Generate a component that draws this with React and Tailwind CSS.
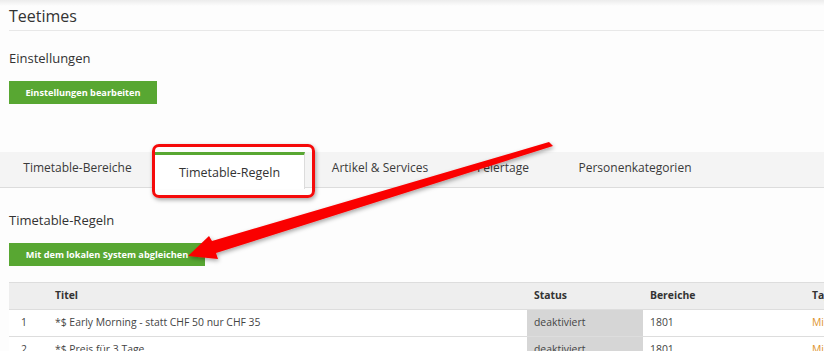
import React from "react";

const tabs = [
  { label: "Timetable-Bereiche", w: "w-[155px]" },
  { label: "Timetable-Regeln", w: "w-[150px]", active: true },
  { label: "Artikel & Services", w: "w-[150px]" },
  { label: "Feiertage", w: "w-[96px]" },
  { label: "Personenkategorien", w: "w-[168px]" },
];

const rows = [
  { nr: 1, title: "*$ Early Morning - statt CHF 50 nur CHF 35", status: "deaktiviert", area: "1801", tag: "Mi" },
  { nr: 2, title: "*$ Preis für 3 Tage", status: "deaktiviert", area: "1801", tag: "Mi" },
];

const App = () => {
  return (
    <div className="relative h-[351px] w-[824px] overflow-hidden bg-[#fdfdfd] text-[#333] font-['Open_Sans',sans-serif]">
      {/* top shadow of header bar */}
      <div className="h-[6px] bg-gradient-to-b from-[#ececec] to-[#fdfdfd]" />

      {/* Page title */}
      <div className="pl-[9px]">
        <h1 className="text-[16px] leading-[20px] pb-[4px] font-normal">Teetimes</h1>
        <div className="h-px bg-[#e8e8e8]" />
      </div>

      {/* Settings */}
      <div className="pl-[9px] pt-[19px]">
        <h2 className="text-[13px] leading-[16px]">Einstellungen</h2>
        <button className="mt-[15px] h-[23px] w-[148px] bg-[#58a732] text-white text-[9.2px] font-bold leading-[23px]">
          Einstellungen bearbeiten
        </button>
      </div>

      {/* Tabs */}
      <div className="mt-[48px] flex h-[36px] bg-[#f4f4f4] border-b border-[#dcdcdc]">
        {tabs.map((t) =>
          t.active ? (
            <div
              key={t.label}
              className={`${t.w} h-[37px] -mb-px bg-white border-t-[3px] border-[#58a732] border-r border-r-[#dcdcdc] flex items-center justify-center text-[12.5px] text-[#333] pt-[2px]`}
            >
              {t.label}
            </div>
          ) : (
            <div key={t.label} className={`${t.w} flex items-center justify-center text-[12px] text-[#3a3a3a] pb-[3px]`}>
              {t.label}
            </div>
          )
        )}
      </div>

      {/* Timetable-Regeln section */}
      <div className="pl-[9px] pt-[24px]">
        <h2 className="text-[13px] leading-[16px]">Timetable-Regeln</h2>
        <button className="mt-[15px] h-[23px] w-[196px] bg-[#58a732] text-white text-[9.2px] font-bold leading-[23px]">
          Mit dem lokalen System abgleichen
        </button>
      </div>

      {/* Table */}
      <div className="pl-[9px] pt-[16px]">
        <table className="w-[900px] table-fixed border-collapse text-[10.4px]">
          <colgroup>
            <col className="w-[39px]" />
            <col className="w-[479px]" />
            <col className="w-[116px]" />
            <col className="w-[162px]" />
            <col />
          </colgroup>
          <thead>
            <tr className="h-[27px] bg-[#eeeeee] border-t border-b border-[#dddddd]">
              <th className="pl-[12px]" />
              <th className="pl-[7px] text-left font-bold text-[#333]">Titel</th>
              <th className="pl-[7px] text-left font-bold text-[#333]">Status</th>
              <th className="pl-[7px] text-left font-bold text-[#333]">Bereiche</th>
              <th className="pl-[7px] text-left font-bold text-[#333]">Tage</th>
            </tr>
          </thead>
          <tbody>
            {rows.map((r) => (
              <tr key={r.nr} className="h-[27px] border-b border-[#dddddd] bg-white">
                <td className="pl-[12px] text-[#444]">{r.nr}</td>
                <td className="pl-[7px] text-[#444]">{r.title}</td>
                <td className="pl-[7px] bg-[#d6d6d6] text-[#444]">{r.status}</td>
                <td className="pl-[7px] text-[#444]">{r.area}</td>
                <td className="pl-[7px] text-[#e0962f]">{r.tag}</td>
              </tr>
            ))}
          </tbody>
        </table>
      </div>

      {/* Annotation: highlight box */}
      <div className="absolute left-[152px] top-[144px] w-[163px] h-[54px] rounded-[7px] border-[3px] border-[#f50a0a] shadow-[1px_2px_4px_rgba(0,0,0,0.35)]" />

      {/* Annotation: arrow */}
      <svg className="absolute left-0 top-0 pointer-events-none" width="824" height="351" viewBox="0 0 824 351">
        <defs>
          <filter id="sh" x="-10%" y="-10%" width="120%" height="130%">
            <feDropShadow dx="1" dy="2" stdDeviation="2" floodColor="#000" floodOpacity="0.35" />
          </filter>
        </defs>
        <path
          d="M549 142 L553 146 L216 253 L218 259 L188 256 L209 236 L212 241 Z"
          fill="#fa0000"
          filter="url(#sh)"
        />
      </svg>
    </div>
  );
};

export default App;
